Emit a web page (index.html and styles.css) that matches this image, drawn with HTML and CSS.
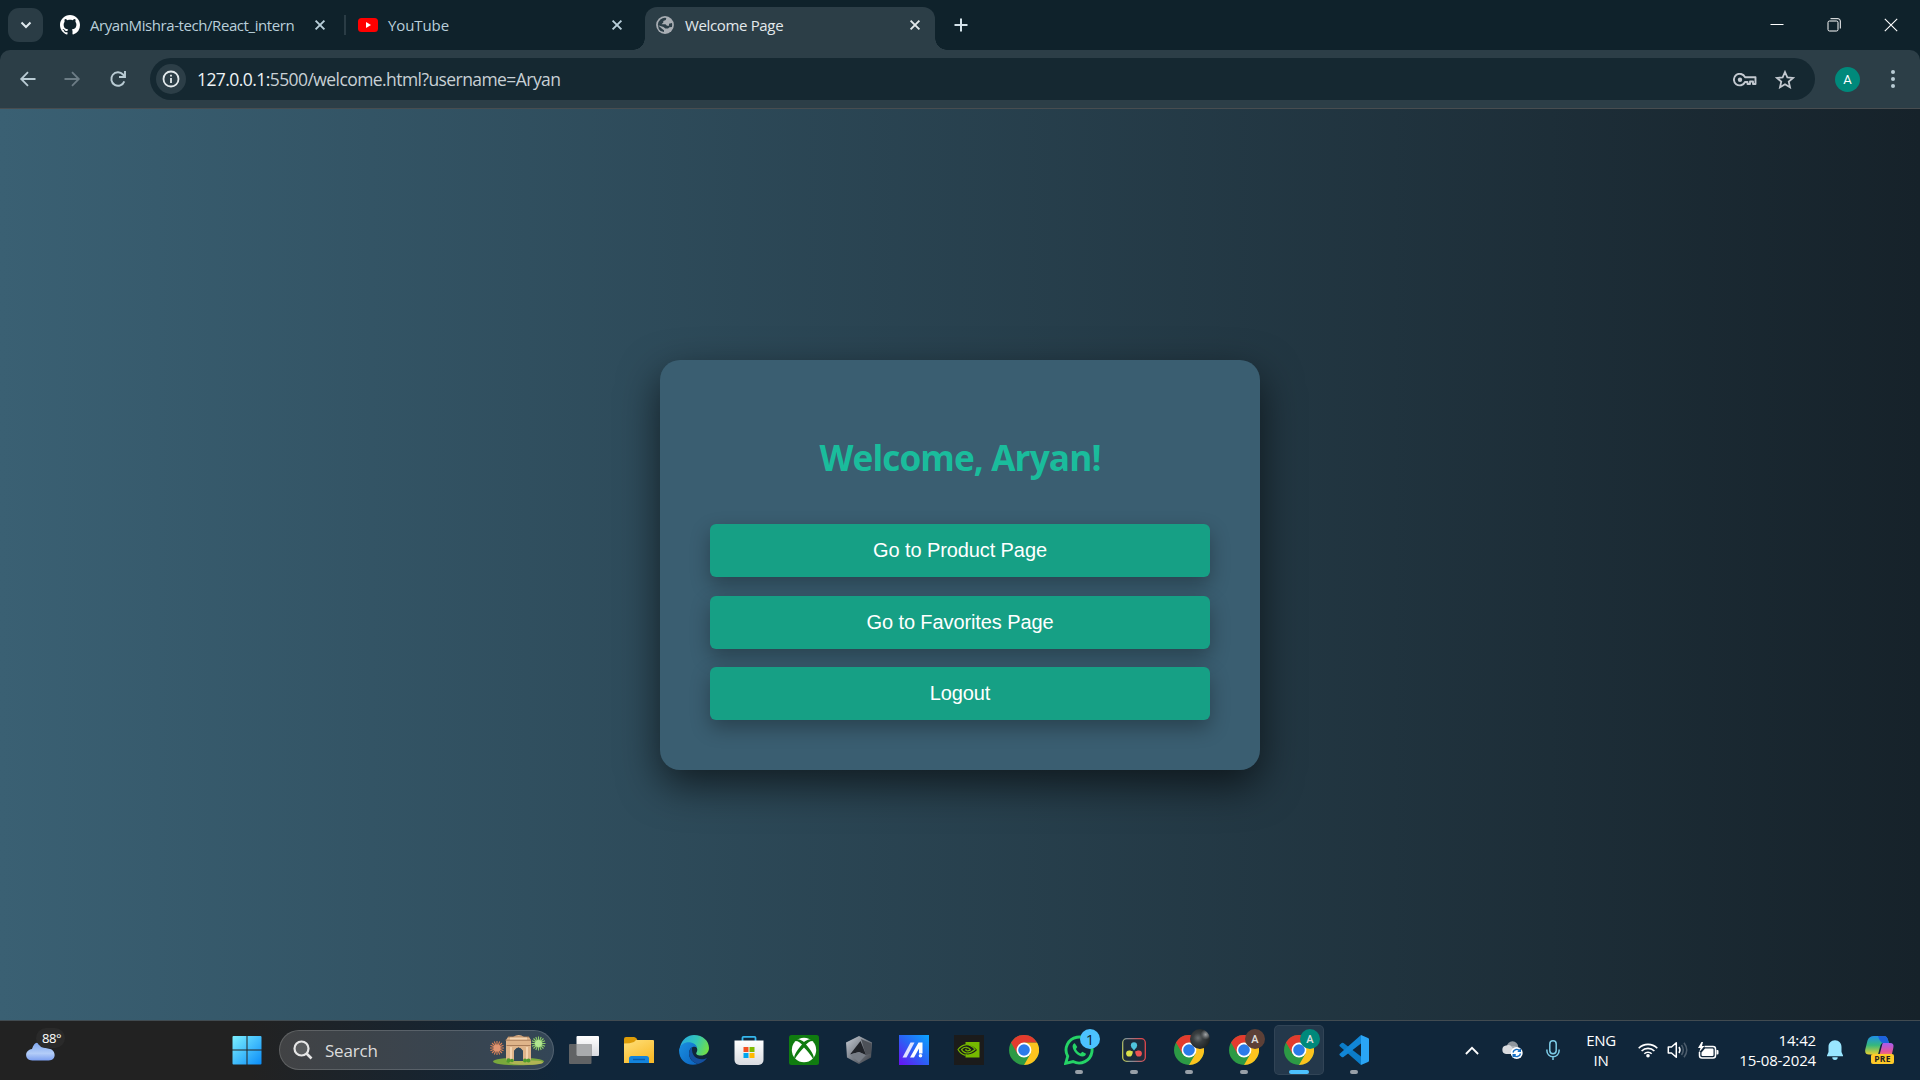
FILE: index.html
```html
<!DOCTYPE html>
<html lang="en">
<head>
<meta charset="utf-8">
<title>Welcome Page</title>
<link rel="stylesheet" href="styles.css">
</head>
<body>
<svg class="defs" width="0" height="0">
  <defs>
    <linearGradient id="gWin" x1="0" y1="0" x2="1" y2="1"><stop offset="0" stop-color="#7cf0ff"/><stop offset="1" stop-color="#0a8cf8"/></linearGradient>
    <linearGradient id="gFold" x1="0" y1="0" x2="0.6" y2="1"><stop offset="0" stop-color="#ffe07a"/><stop offset="1" stop-color="#f9bb2b"/></linearGradient>
    <linearGradient id="gEdgeA" x1="0" y1="0.3" x2="1" y2="0.6"><stop offset="0" stop-color="#26a9e0"/><stop offset="0.5" stop-color="#33c6b8"/><stop offset="1" stop-color="#72df45"/></linearGradient>
    <linearGradient id="gEdgeB" x1="0" y1="0" x2="1" y2="1"><stop offset="0" stop-color="#1a8fe0"/><stop offset="1" stop-color="#0b63c0"/></linearGradient>
    <linearGradient id="gMa" x1="1" y1="0" x2="0" y2="1"><stop offset="0" stop-color="#0aa5ff"/><stop offset="0.5" stop-color="#2a62f5"/><stop offset="1" stop-color="#6a10f2"/></linearGradient>
    <linearGradient id="gWhite" x1="0" y1="0" x2="0" y2="1"><stop offset="0" stop-color="#fff"/><stop offset="1" stop-color="#d9dbe0"/></linearGradient>
    <linearGradient id="gCloud" x1="0" y1="0" x2="0" y2="1"><stop offset="0" stop-color="#7ea6ee"/><stop offset="0.6" stop-color="#b3cdf8"/><stop offset="1" stop-color="#7c9ff0"/></linearGradient>
    <linearGradient id="gSteel" x1="0" y1="0" x2="1" y2="1"><stop offset="0" stop-color="#c7ccd4"/><stop offset="0.5" stop-color="#7b818a"/><stop offset="1" stop-color="#3a3d43"/></linearGradient>
    <linearGradient id="gDav" x1="0" y1="1" x2="1" y2="0.8"><stop offset="0" stop-color="#c9cf45"/><stop offset="0.35" stop-color="#7f8f9a"/><stop offset="1" stop-color="#e0474c"/></linearGradient>
    <linearGradient id="gCopA" x1="0" y1="0" x2="0" y2="1"><stop offset="0" stop-color="#1f8fe8"/><stop offset="0.5" stop-color="#35b87c"/><stop offset="1" stop-color="#e8d030"/></linearGradient>
    <linearGradient id="gCopB" x1="0" y1="0" x2="0" y2="1"><stop offset="0" stop-color="#a65cf0"/><stop offset="0.6" stop-color="#e4559a"/><stop offset="1" stop-color="#fb8a58"/></linearGradient>
  </defs>
  <symbol id="x" viewBox="0 0 12 12"><path d="M1.6 1.6l8.8 8.8M10.4 1.6l-8.8 8.8" stroke="currentColor" stroke-width="1.9" fill="none"/></symbol>
  <symbol id="chrome" viewBox="0 0 30 30">
    <circle cx="15" cy="15" r="15" fill="#2c9a45"/>
    <path d="M15 7.5H28A15 15 0 0 1 15 30L21.5 18.7z" fill="#fcc31e"/>
    <path d="M2 7.500L8.500 18.700L15 15L15 7.500L28 7.500A15 15 0 0 0 2 7.500" fill="#e33b2e"/>
    <circle cx="15" cy="15" r="7.400" fill="#fff"/><circle cx="15" cy="15" r="5.800" fill="#2b7be9"/>
  </symbol>
</svg>

<header class="tabstrip">
  <div class="tab-search"><svg width="12" height="8" viewBox="0 0 12 8"><path d="M1.500 1.500L6 6l4.500-4.500" fill="none" stroke="#dfe9ee" stroke-width="2"/></svg></div>
  <div class="tab tab-one">
    <svg width="20" height="20" viewBox="0 0 16 16"><path fill="#fff" d="M8 0C3.580 0 0 3.580 0 8c0 3.540 2.290 6.530 5.470 7.590.4.070.550-.170.550-.380 0-.190-.010-.820-.010-1.490-2.010.370-2.530-.490-2.690-.940-.090-.230-.480-.940-.820-1.130-.280-.150-.680-.520-.010-.530.630-.010 1.080.580 1.230.820.720 1.210 1.870.870 2.330.660.070-.520.280-.870.510-1.070-1.780-.200-3.640-.890-3.640-3.950 0-.870.310-1.590.820-2.150-.080-.200-.360-1.020.080-2.120 0 0 .670-.210 2.200.820.640-.180 1.320-.270 2-.270s1.360.090 2 .270c1.530-1.040 2.200-.820 2.200-.820.440 1.100.160 1.920.080 2.120.510.560.820 1.270.820 2.150 0 3.070-1.870 3.750-3.650 3.950.290.250.540.730.540 1.480 0 1.070-.010 1.930-.010 2.200 0 .210.150.460.550.380A8.010 8.010 0 0 0 16 8c0-4.420-3.580-8-8-8z"/></svg>
    <span class="tab-title t1">AryanMishra-tech/React_intern</span>
    <svg class="close" width="12" height="12"><use href="#x"/></svg>
  </div>
  <i class="tab-sep"></i>
  <div class="tab tab-two">
    <svg width="20" height="14" viewBox="0 0 20 14"><rect width="20" height="14" rx="3.500" fill="#f00"/><path d="M8 4l5 3-5 3z" fill="#fff"/></svg>
    <span class="tab-title t2">YouTube</span>
    <svg class="close" width="12" height="12"><use href="#x"/></svg>
  </div>
  <div class="tab tab-active">
    <svg width="18" height="18" viewBox="0 0 18 18"><circle cx="9" cy="9" r="8.900" fill="#a9aeb4"/><path d="M10.300 1.900L9.800 4 7.300 5v1.500L5.500 8.300h4l1.500 1.500h2v-2l3-.8q.5 2-.1 4l-2.400.2-1.500 1.400H9.300L7.500 11 2 9.300Q2 13 4.500 15l3.500 1v-1.800l-2-1.500L1.800 9A7.200 7.200 0 0 1 10.300 1.900z" fill="#2c3e47"/></svg>
    <span class="tab-title t3">Welcome Page</span>
    <svg class="close" width="12" height="12"><use href="#x"/></svg>
  </div>
  <svg class="new-tab" width="14" height="14" viewBox="0 0 14 14"><path d="M7 .5v13M.5 7h13" stroke="#d5e3ea" stroke-width="2"/></svg>
  <div class="window-controls">
    <svg width="14" height="14" viewBox="0 0 14 14"><path d="M0.500 6.500h13" stroke="#fff"/></svg>
    <svg width="14" height="14" viewBox="0 0 14 14" fill="none" stroke="#fff"><rect x="1" y="3" width="10" height="10" rx="1.500"/><path d="M3.500 .7H11a2.300 2.300 0 0 1 2.300 2.300v7.500"/></svg>
    <svg width="14" height="14" viewBox="0 0 14 14"><path d="M.8.800l12.400 12.400M13.200.800L.8 13.200" stroke="#fff" stroke-width="1.100"/></svg>
  </div>
</header>

<div class="toolbar-wrap"><nav class="toolbar">
  <svg class="nav-btn" width="18" height="16" viewBox="0 0 18 16" fill="none" stroke="#b9cbd4" stroke-width="1.800"><path d="M16.500 8H2.500M9 1.200L2.200 8 9 14.800"/></svg>
  <svg class="nav-btn" width="18" height="16" viewBox="0 0 18 16" fill="none" stroke="#6c7c85" stroke-width="1.800"><path d="M1.500 8h14M9 1.200L15.800 8 9 14.800"/></svg>
  <svg class="nav-btn reload" width="18" height="18" viewBox="0 0 18 18" fill="none" stroke="#b9cbd4" stroke-width="1.900"><path d="M15.300 11.300A6.700 6.700 0 1 1 14 4.500L15.500 6.200"/><path d="M16 1v6h-6"/></svg>
  <div class="omnibox">
    <span class="site-info"><svg width="18" height="18" viewBox="0 0 18 18" fill="none" stroke="#e3e9ec" stroke-width="1.800"><circle cx="9" cy="9" r="7.500"/><path d="M9 8v5M9 4.800v1.800"/></svg></span>
    <span class="url"><b>127.0.0.1:</b>5500/welcome.html?username=Aryan</span>
    <svg class="key" width="24" height="14" viewBox="0 0 24 14" fill="none" stroke="#c3c9d0" stroke-width="1.900"><path d="M12 4.200H22.500V11H20V8.500H17V11H14.500V9H12A5.800 5.800 0 1 1 12 4.200z" stroke-linejoin="round"/><circle cx="7" cy="6.700" r="2.200" fill="#c3c9d0" stroke="none"/></svg>
    <svg class="star" width="20" height="19" viewBox="0 0 20 19"><path d="M10 2l2.350 5.300 5.750.550-4.350 3.800L15 17.300l-5-3-5 3 1.250-5.650L1.900 7.850l5.750-.550z" fill="none" stroke="#c3c9d0" stroke-width="1.800"/></svg>
  </div>
  <span class="avatar">A</span>
  <svg class="menu" width="4" height="18" viewBox="0 0 4 18" fill="#b9cbd4"><circle cx="2" cy="2" r="2"/><circle cx="2" cy="9" r="2"/><circle cx="2" cy="16" r="2"/></svg>
</nav></div>

<main class="page">
  <section class="card">
    <h1>Welcome, Aryan!</h1>
    <button>Go to Product Page</button>
    <button>Go to Favorites Page</button>
    <button>Logout</button>
  </section>
</main>

<footer class="taskbar">
  <div class="weather">
    <svg width="32" height="20" viewBox="0 0 32 20"><path d="M7 8C9 1 13-1 16 6l9 2c6 1 7 12-2 11.500H8C-1 20-1 9 7 8z" fill="url(#gCloud)"/></svg>
    <span class="temp">88°</span>
  </div>
  <svg class="start" width="30" height="30" viewBox="0 0 30 30" fill="url(#gWin)"><path d="M.5 2a1 1 0 0 1 1-1H14.500V14.500H.5zM15.500 1H28.500a1 1 0 0 1 1 1V14.500h-14zM.5 15.500h14v14H1.500a1 1 0 0 1-1-1zM15.500 15.500h14v13a1 1 0 0 1-1 1h-13z"/></svg>
  <div class="search">
    <svg width="20" height="20" viewBox="0 0 20 20" fill="#ffffff22" stroke="#e6e6e6" stroke-width="2.200"><circle cx="8.500" cy="8.500" r="7"/><path d="M13.500 13.500L18.500 18.500" stroke-width="2.600"/></svg>
    <span>Search</span>
    <svg class="arch" width="56" height="32" viewBox="0 0 56 32">
      <ellipse cx="28.500" cy="27.500" rx="25.500" ry="3.800" fill="#79a83c"/><ellipse cx="36" cy="28.500" rx="17" ry="2.300" fill="#b0b454"/>
      <path d="M16 27V6l2-3h5q6-4 11 0h5l2 3v21h-8V17q-4.500-7-9 0v10z" fill="#dfb48a"/>
      <path d="M24 27V17q4.500-7 9 0v10z" fill="#31475a"/>
      <path d="M15.500 6.200h25.500M16.500 11.500h24M18 3h21" stroke="#a87c59" stroke-width="1"/><path d="M20 4.500h17M21 13v12M37 13v12" stroke="#f3d3b0" stroke-width="2"/>
      <g fill="#4d9b2c"><circle cx="18.500" cy="26.500" r="2.200"/><circle cx="22" cy="26.500" r="1.800"/><circle cx="35" cy="26.500" r="2"/><circle cx="38.500" cy="26.500" r="2.100"/></g>
      <path d="M7 7v14M0 14h14M2 9l10 10M12 9L2 19M4.300 7.500l5.400 13M9.700 7.500l-5.400 13M.5 11.300l13 5.400M13.500 11.300l-13 5.400" stroke="#d98158" stroke-width="1.100"/><circle cx="7" cy="14" r="3.500" fill="#df9572"/>
      <path d="M48.500 2.500v14M41.500 9.500h14M43.500 4.500l10 10M53.500 4.500l-10 10M45.800 3l5.400 13M51.200 3l-5.400 13M42 6.800l13 5.400M55 6.800l-13 5.400" stroke="#8fcf6a" stroke-width="1.100"/><circle cx="48.500" cy="9.500" r="3.500" fill="#b2e591"/>
    </svg>
  </div>
  <div class="apps">
    <div class="app"><svg width="30" height="30" viewBox="0 0 30 30"><rect x="7.500" y="1" width="22.500" height="20" rx="1" fill="url(#gWhite)"/><rect y="9" width="22.500" height="20" rx="1" fill="#616365"/><path d="M7.500 9h15v12h-14l-1-1z" fill="#a9abad"/></svg></div>
    <div class="app"><svg width="30" height="30" viewBox="0 0 30 30"><path d="M0 4a2 2 0 0 1 2-2h8q1.500 0 2.500 1.500L14 6v8H0z" fill="#dd9c08"/><path d="M0 8.500Q6 8.500 10 7l2-2h17a1 1 0 0 1 1 1v22H0z" fill="url(#gFold)"/><path d="M5 28v-4.500a2.500 2.500 0 0 1 2.500-2.500h15a2.500 2.500 0 0 1 2.500 2.500V28z" fill="#1384dc"/><path d="M9 24.500h12" stroke="#0b5ca8" stroke-width="1.400"/></svg></div>
    <div class="app"><svg width="30" height="30" viewBox="0 0 30 30"><path d="M1 12C3 4 9 0 15 0c9 0 15 6 15 13 0 5-4 7.500-8 7.500-4 0-5.500-1.500-4.500-3 2-3 .5-8-6-8C6 9.500 2 13 1 16z" fill="url(#gEdgeA)"/><path d="M0 15c1-6 7-8.500 12-7.500 3 .5 5.500 2.500 6 5-4-2-8 1-8 6 0 6 5 9.500 9 10.500C9 32 0 26 0 15z" fill="url(#gEdgeB)"/><path d="M13 12c-5 4-4 14 6 17 4-1 7-3 9-6-6 3-16 1-15-11z" fill="#14509f"/></svg></div>
    <div class="app"><svg width="30" height="30" viewBox="0 0 30 30"><path d="M8.500 6V2.800a1 1 0 0 1 1-1h11a1 1 0 0 1 1 1V6" fill="none" stroke="#35b8ee" stroke-width="1.800"/><path d="M.5 5.500h29V25a5 5 0 0 1-5 5h-19a5 5 0 0 1-5-5z" fill="url(#gWhite)"/><path fill="#f25022" d="M9.500 12h5v5h-5z"/><path fill="#7fba00" d="M15.500 12h5v5h-5z"/><path fill="#00a4ef" d="M9.500 18h5v5h-5z"/><path fill="#ffb900" d="M15.500 18h5v5h-5z"/></svg></div>
    <div class="app"><svg width="30" height="30" viewBox="0 0 30 30"><rect width="30" height="30" rx="2.500" fill="#107c10"/><circle cx="15" cy="15" r="12.200" fill="#fff"/><path d="M7 4.500C10 3.500 13 5.500 15 7c2-1.500 5-3.500 8-2.500l1.500 1.500C21 5.500 18.500 8 17 9.500c4 4.500 9 11 7.500 15C22 20 18 15.500 15 12.500 12 15.500 8 20 5.500 24.500 4 20.500 9 14 13 9.500 11.500 8 9 5.500 5.500 6z" fill="#107c10"/></svg></div>
    <div class="app"><svg width="30" height="30" viewBox="0 0 30 30"><path d="M15 1l13 6.500-1 15L15 29 3 22.500 2 7.500z" fill="url(#gSteel)"/><path d="M16.500 6L6 19.500 15 17l7 3z" fill="#202329"/><path d="M15 17l7 3-7 7.500L6 19.500z" fill="#777d86"/><path d="M17 4l5 16 5-1.500.5-10z" fill="#4d5158"/></svg></div>
    <div class="app"><svg width="30" height="30" viewBox="0 0 30 30"><rect width="30" height="30" fill="url(#gMa)"/><path d="M3.500 22.500L11.500 7.500h4L7.500 22.500z" fill="#dfe3ff"/><path d="M11 22.500L19.500 7.500h4v11h-3.500v-5l-5 9z" fill="#fff"/><circle cx="21.500" cy="20.800" r="1.800" fill="#fff"/></svg></div>
    <div class="app"><svg width="30" height="30" viewBox="0 0 30 30"><rect width="30" height="30" fill="#1b1b1b"/><path d="M11.500 7H25.500V22.500H11.500z" fill="#76b900"/><path d="M3.500 14.500Q12 5.500 21.500 13.500L23 15Q14 24 3.500 14.500z" fill="#1b1b1b"/><path d="M11.500 20.300Q6.500 19 4 14.500 7 10.500 11.500 9.800M11.500 9.800Q17 9.300 21 14.500 17 18 12.500 18 9 17.500 7.500 14.500 10 12 12.500 12.300 15.500 12.800 16.500 14.700 14 16.500 12.200 15.500 11.300 14.500 12.500 14" fill="none" stroke="#76b900" stroke-width="1.200"/></svg></div>
    <div class="app"><svg width="30" height="30"><use href="#chrome"/></svg></div>
    <div class="app"><svg width="30" height="30" viewBox="0 0 30 30"><path d="M1.700 28.300l2-7A13 13 0 1 1 9 26.500z" fill="none" stroke="#25d366" stroke-width="2.900"/><path d="M10.800 8.200c-1 .2-2.300 1.400-2.200 3.300C9 16.500 14 21 18.500 21.500c2 0 3.400-1.300 3.500-2.800l-3.700-2-1.700 1.800c-2-.8-3.700-2.500-4.700-4.500L13.300 12z" fill="#25d366"/></svg><span class="badge count">1</span><i class="dot"></i></div>
    <div class="app"><svg width="24" height="24" viewBox="0 0 24 24"><rect x=".7" y=".7" width="22.600" height="22.600" rx="4" fill="#1d2b3b" stroke="url(#gDav)" stroke-width="1.300"/><g><circle cx="12" cy="7.300" r="3.100" fill="#4fc3dc"/><path d="M9.300 9L12 12.500 14.700 9z" fill="#4fc3dc"/><circle cx="7.200" cy="15.500" r="3.100" fill="#dbe04a"/><path d="M7.500 12.400l3.500 1-1.200 3.600z" fill="#dbe04a"/><circle cx="16.800" cy="15.500" r="3.100" fill="#ee5253"/><path d="M16.500 12.400l-3.500 1 1.200 3.600z" fill="#ee5253"/></g></svg><i class="dot"></i></div>
    <div class="app"><svg width="30" height="30"><use href="#chrome"/></svg><span class="badge photo"></span><i class="dot"></i></div>
    <div class="app"><svg width="30" height="30"><use href="#chrome"/></svg><span class="badge brown">A</span><i class="dot"></i></div>
    <div class="app active"><svg width="30" height="30"><use href="#chrome"/></svg><span class="badge teal">A</span><i class="dot"></i></div>
    <div class="app"><svg width="30" height="30" viewBox="0 0 30 30"><path d="M22 0L29 3a1.500 1.500 0 0 1 1 1.500v21a1.500 1.500 0 0 1-1 1.500l-7 3z" fill="#2aa5f5"/><path d="M22 30L1 11.500a1.300 1.300 0 0 1 0-2L2.700 8a1.500 1.500 0 0 1 1.800 0L22 21.500z" fill="#0b7cc8"/><path d="M22 0L1 18.500a1.300 1.300 0 0 0 0 2L2.700 22a1.500 1.500 0 0 0 1.800 0L22 8.500z" fill="#1186d6"/></svg><i class="dot"></i></div>
  </div>
  <div class="tray">
    <svg class="chev" width="14" height="9" viewBox="0 0 14 9"><path d="M.9 8L7 1.800 13.100 8" fill="none" stroke="#fff" stroke-width="1.800"/></svg>
    <svg class="cloud" width="21" height="18" viewBox="0 0 21 18"><circle cx="10.500" cy="6" r="5.700" fill="#90979e"/><path d="M10 5h3q4 1 4 5v3H8z" fill="#a9afb5"/><path d="M4 13a4.300 4.300 0 0 1 0-8.500q5-2 7 3.500v5z" fill="#d9dbde"/><circle cx="14.700" cy="12" r="6" fill="#fff"/><path d="M11 11.500a3.900 3.900 0 0 1 7-1.500M18.500 12.500a3.900 3.900 0 0 1-7 1.500M18.300 7.700v2.600h-2.600M11.200 16.300v-2.600h2.600" fill="none" stroke="#1670c4" stroke-width="1.400"/></svg>
    <svg class="mic" width="14" height="20" viewBox="0 0 14 20" fill="none" stroke="#7ccbe6" stroke-width="1.500"><rect x="3.800" y=".8" width="6.400" height="13" rx="3.200"/><path d="M.9 9.500v1.200a6.100 6.100 0 0 0 12.200 0V9.500M7 16.800V20"/></svg>
    <div class="lang">ENG<br>IN</div>
    <svg class="wifi" width="20" height="16" viewBox="0 0 20 16" fill="none" stroke="#fff" stroke-width="1.600"><path d="M.7 6.200a13.200 13.200 0 0 1 18.600 0M3.600 9a9 9 0 0 1 12.800 0M6.300 11.700a5.300 5.300 0 0 1 7.400 0"/><circle cx="10" cy="13.800" r="1.800" fill="#fff" stroke="none"/></svg>
    <svg class="vol" width="21" height="18" viewBox="0 0 21 18" fill="none" stroke="#fff" stroke-width="1.500"><path d="M1.300 6v6h3.200l4.800 4.300V1.700L4.500 6z" stroke-linejoin="round"/><path d="M12 6q2 3 0 6"/><path d="M14.500 4q3.500 5 0 10M17 1.700q5.500 7.300 0 14.600" stroke="#4d5d6c"/></svg>
    <svg class="batt" width="21" height="17" viewBox="0 0 21 17"><path d="M6.500 4.500H15a2.500 2.500 0 0 1 2.500 2.500v6.500A2.500 2.500 0 0 1 15 16H4a2.500 2.500 0 0 1-2.500-2.500V10" fill="none" stroke="#fff" stroke-width="1.500"/><path d="M7 6.500h7.500a1 1 0 0 1 1 1V13a1 1 0 0 1-1 1h-10a1 1 0 0 1-1-1v-2.500zM18.500 8h1q1 0 1 1v2.500q0 1-1 1h-1zM3.500 0L0 6h2.500L1 10.500 6.500 4H4L5 0z" fill="#fff"/></svg>
    <div class="clock">14:42<br>15-08-2024</div>
    <svg class="bell" width="16" height="20" viewBox="0 0 16 20" fill="#99e6ff"><path d="M8 .3c-4 0-6.500 3-6.500 6.700v5L0 15.500V16.300h16v-.8L14.500 12V7C14.500 3.300 12 .3 8 .3zM5.300 17.200h5.400a2.700 2.700 0 0 1-5.400 0z"/></svg>
    <div class="copilot"><svg width="30" height="28" viewBox="0 0 30 28"><path d="M9 0h10q3 0 4 4l1 3h-6q-2 0-3 4l-2 7.500H4q-5 0-3.500-6l2-8Q4 0 9 0z" fill="url(#gCopA)"/><path d="M13 0h6q3 0 4 4l1 3h-6q-3-.5-5-7z" fill="#1d62dd"/><path d="M18 7h7q4.500 0 3.300 5l-2 9H12q2 0 3-4l2-7.500Q17.300 7 18 7z" fill="url(#gCopB)"/></svg><span class="pre">PRE</span></div>
  </div>
</footer>
</body>
</html>
```
FILE: styles.css
```css
* { box-sizing: border-box; }
html, body { margin: 0; height: 100%; }
body {
  display: flex; flex-direction: column;
  width: 1920px; height: 1080px; overflow: hidden;
  font-family: "Open Sans", "Noto Sans", sans-serif;
  background: #0f222b;
}
svg { display: block; flex: none; }
.defs { position: absolute; }

/* Tab strip */
.tabstrip { display: flex; align-items: center; height: 50px; flex: none; background: #0f222b; color: #b9cfda; }
.tab-search { display: flex; align-items: center; justify-content: center; width: 35px; height: 34px; margin-left: 8px; border-radius: 11px; background: #2a3c45; }
.tab { display: flex; align-items: center; height: 43px; }
.tab-title { font-size: 15px; white-space: nowrap; line-height: 22px; margin-left: 10px; }
.tab .close { margin-left: auto; }
.tab-one { width: 266px; margin-left: 17px; }
.tab-sep { width: 2px; height: 20px; margin-left: 18px; background: #2a3c45; }
.tab-two { width: 265px; margin-left: 12px; }
.tab-active {
  width: 290px; height: 43px; margin-left: 22px; padding: 0 14px 8px 11px; align-self: flex-end;
  border-radius: 12px 12px 0 0; background: #2c3e47; color: #e3e9ec;
  position: relative;
}
.tab-active::before, .tab-active::after {
  content: ""; position: absolute; bottom: 0; width: 12px; height: 12px;
}
.tab-active::before { left: -12px; background: radial-gradient(circle at 0 0, transparent 11.5px, #2c3e47 12px); }
.tab-active::after { right: -12px; background: radial-gradient(circle at 100% 0, transparent 11.5px, #2c3e47 12px); }
.tab-active .tab-title { margin-left: 11px; }
.t1 { letter-spacing: -0.42px; }
.t2 { letter-spacing: -0.1px; }
.t3 { letter-spacing: -0.35px; }
.new-tab { margin-left: 19px; }
.window-controls { display: flex; align-items: center; gap: 43px; margin-left: auto; margin-right: 22px; }

/* Toolbar */
.toolbar-wrap { flex: none; height: 59px; }
.toolbar { display: flex; align-items: center; height: 59px; background: #2c3e47; border-radius: 10px 10px 0 0; border-bottom: 1px solid #484d50; }
.nav-btn { margin-left: 19px; }
.nav-btn + .nav-btn { margin-left: 26px; }
.nav-btn + .reload { margin-left: 28px; }
.omnibox { display: flex; align-items: center; width: 1665px; height: 42px; margin-left: 23px; padding: 0 20px 0 6px; border-radius: 21px; background: #152831; }
.site-info { display: flex; align-items: center; justify-content: center; width: 30px; height: 30px; border-radius: 50%; background: #2c3e47; }
.url { margin-left: 11px; font-size: 17.5px; line-height: 24px; letter-spacing: -0.57px; color: #c8d0d5; white-space: nowrap; }
.url b { font-weight: 400; color: #eef3f5; }
.key { margin-left: auto; position: relative; top: 1px; }
.star { margin-left: 18px; }
.avatar { display: flex; align-items: center; justify-content: center; width: 25px; height: 25px; margin-left: 20px; border-radius: 50%; background: #00897b; color: #fff; font: 13px Roboto, sans-serif; }
.menu { margin-left: 31px; }

/* Page */
.page { flex: 1; display: flex; align-items: center; justify-content: center; background: linear-gradient(to right, #3a6073, #16222a); }
.card {
  display: flex; flex-direction: column; width: 600px; height: 410px; padding: 50px; border-radius: 20px;
  background: #3a5e71; box-shadow: 0 15px 40px rgba(0, 0, 0, 0.6);
}
.card h1 { margin: 23px 0 43px; height: 48px; font-size: 35.2px; line-height: 48px; font-weight: 700; letter-spacing: -0.9px; text-align: center; color: #1abc9c; }
.card button {
  height: 53px; flex: none; margin: 0 0 19px; padding: 0; border: 0; border-radius: 6px; background: #16a085;
  color: #fff; font: 20px "Liberation Sans", Arial, sans-serif; letter-spacing: -0.1px; box-shadow: 0 8px 20px rgba(0, 0, 0, 0.3);
}
.card button:nth-of-type(2) { margin-bottom: 18px; }

/* Taskbar */
.taskbar {
  display: flex; align-items: center; height: 60px; flex: none; padding-bottom: 1px; border-top: 1px solid #414b51;
  background: linear-gradient(to right, #222 0, #222 250px, #10263a 560px, #10263a 100%); color: #fff;
}
.weather { position: relative; width: 40px; height: 40px; margin-left: 25px; padding-top: 11px; }
.temp { position: absolute; left: 11px; top: -2px; width: 29px; height: 20px; border-radius: 10px; background: #2a2a2a; text-align: center; font-size: 13px; line-height: 20px; letter-spacing: -0.4px; padding-left: 2px; }
.start { margin-left: 167px; }
.search { display: flex; align-items: center; width: 275px; height: 40px; margin-left: 17px; padding: 0 7px 0 13px; border-radius: 20px; border: 1px solid #ffffff28; background: #ffffff26; font-size: 17px; letter-spacing: -0.2px; color: #dcdcdc; }
.search span { margin-left: 12px; }
.arch { margin-left: auto; }
.apps { display: flex; align-items: center; margin-left: 5px; gap: 5px; }
.app { position: relative; display: flex; align-items: center; justify-content: center; width: 50px; height: 50px; border-radius: 5px; }
.app.active { background: #ffffff16; box-shadow: inset 0 0 0 1px #ffffff10; }
.dot { position: absolute; bottom: 1px; left: 21px; width: 8px; height: 4px; border-radius: 2px; background: #98a0a8; }
.active .dot { left: 15px; width: 20px; background: #4cc2ff; }
.badge { position: absolute; right: 4px; top: 4px; width: 20px; height: 20px; border-radius: 50%; display: flex; align-items: center; justify-content: center; font: 500 11px Roboto, sans-serif; color: #e0e0e0; }
.count { background: #4cc2ff; color: #12222e; font: 15px "Open Sans", sans-serif; }
.photo { background: radial-gradient(circle at 78% 28%, #a0a3a5 0, #5a5e60 14%, transparent 24%), radial-gradient(circle at 40% 45%, #6b7072 0, #3a3f41 30%, #1d2224 75%); }
.brown { background: #5d4037; }
.teal { background: #00897b; }

.tray { display: flex; align-items: center; margin-left: auto; margin-right: 25px; }
.cloud { margin-left: 23px; }
.mic { margin-left: 23px; }
.lang { width: 40px; margin-left: 21px; text-align: center; font-size: 15px; line-height: 20px; letter-spacing: -0.3px; }
.wifi { margin-left: 17px; }
.vol { margin-left: 9px; }
.batt { margin-left: 10px; }
.clock { width: 90px; margin-left: 7px; text-align: right; font-size: 15px; line-height: 20px; letter-spacing: -0.15px; white-space: nowrap; }
.bell { margin-left: 11px; }
.copilot { position: relative; margin-left: 22px; }
.pre { position: absolute; left: 6px; top: 18px; width: 23px; height: 10px; border-radius: 2px; background: #ffc928; color: #222; font: 700 8.5px/10px "Open Sans", sans-serif; text-align: center; letter-spacing: 0.3px; }
```
